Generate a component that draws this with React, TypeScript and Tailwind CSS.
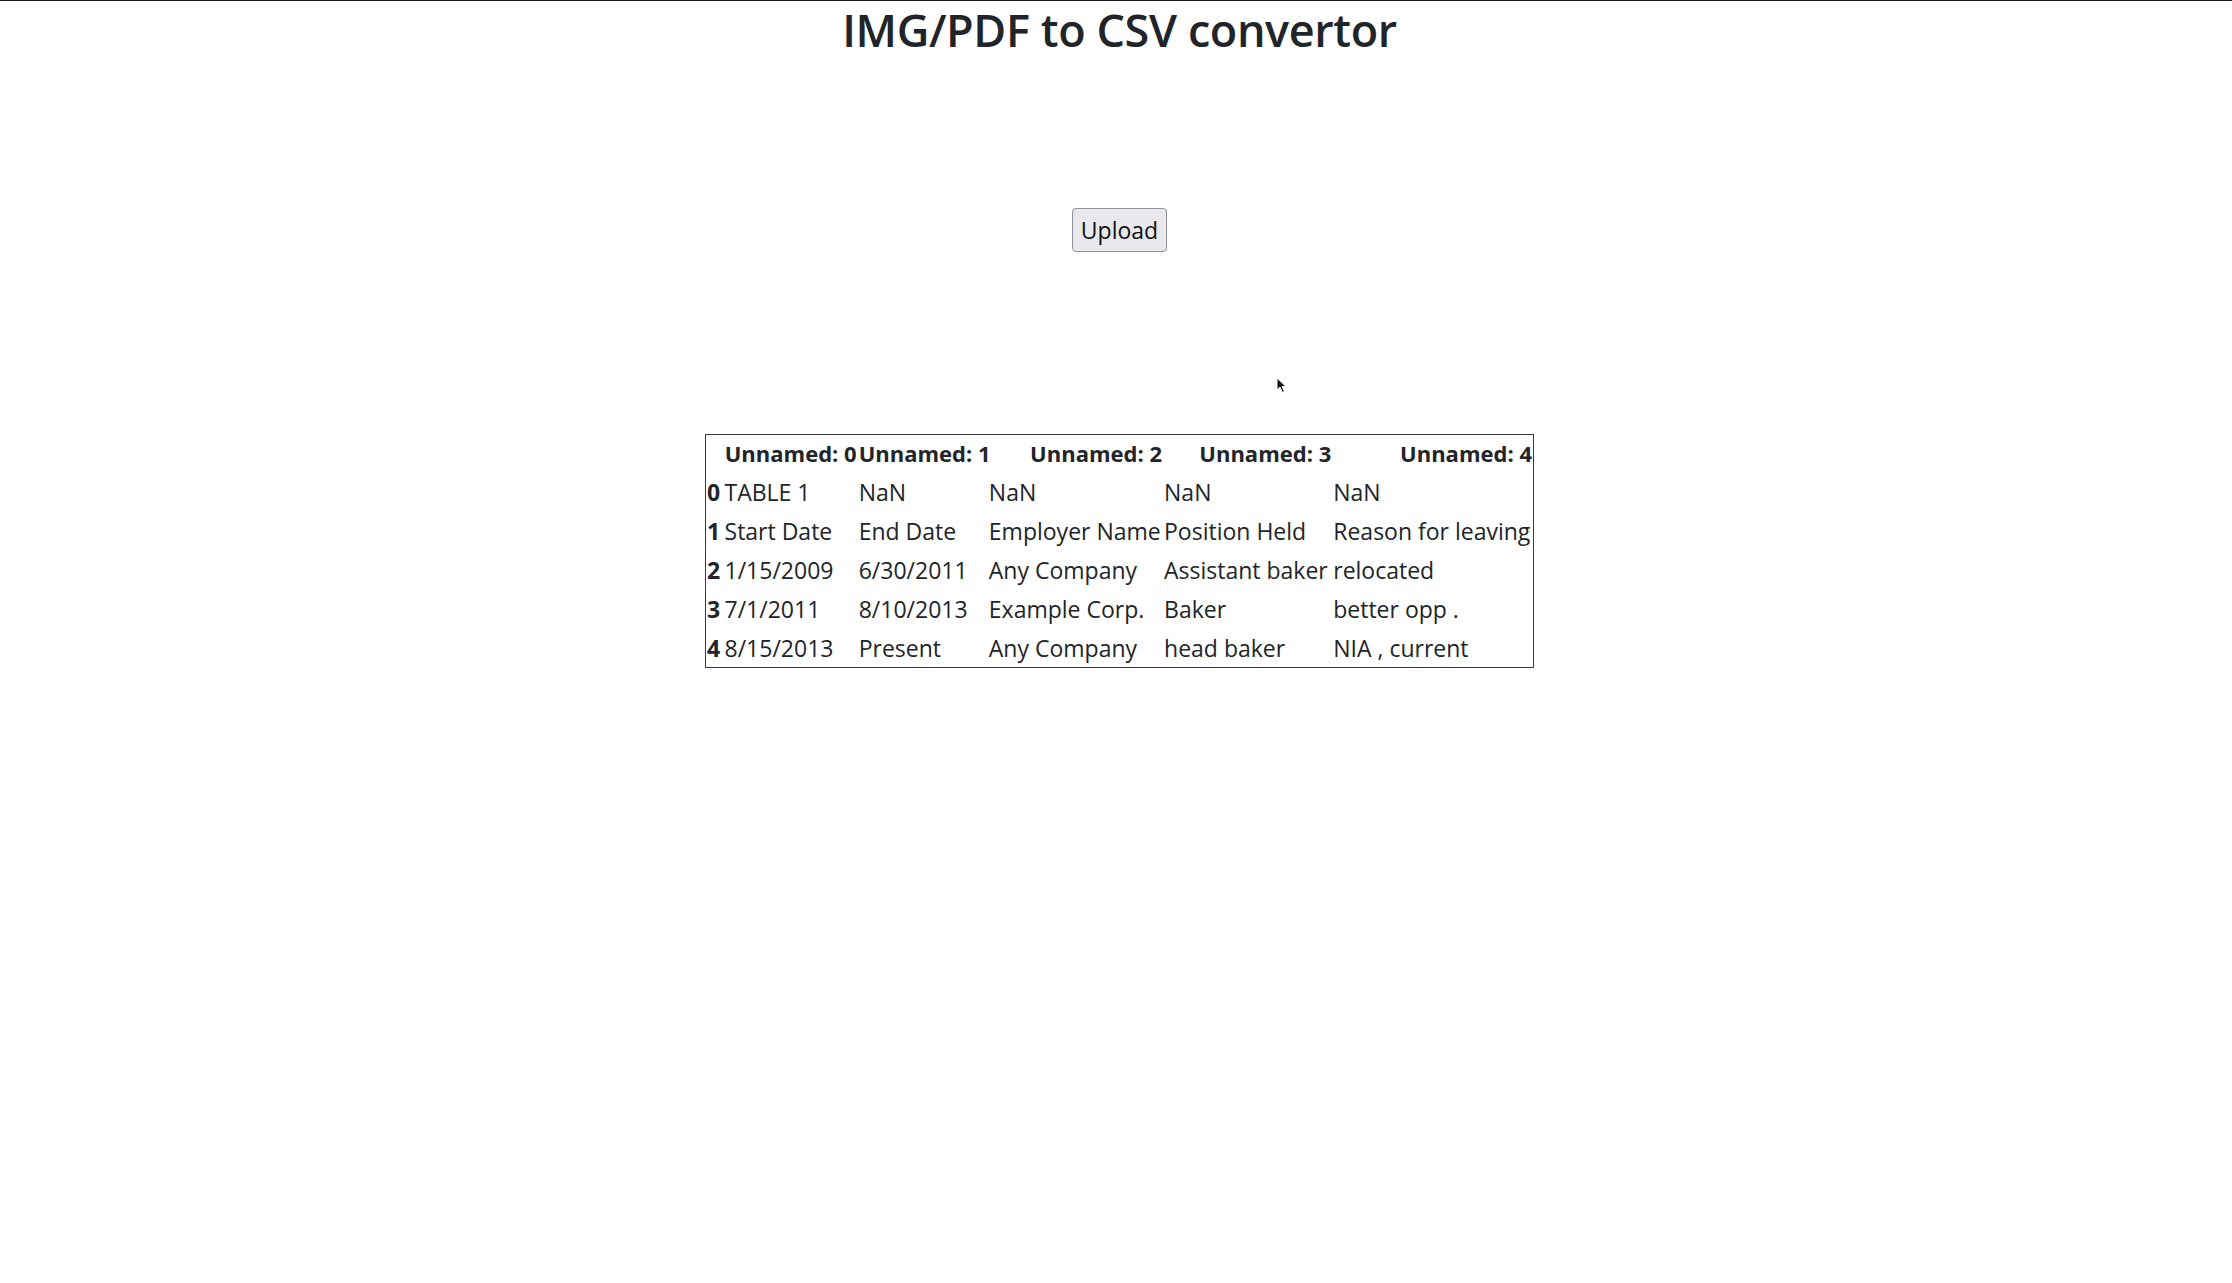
import React from 'react';

const headers = ['Unnamed: 0', 'Unnamed: 1', 'Unnamed: 2', 'Unnamed: 3', 'Unnamed: 4'];

const rows: string[][] = [
  ['TABLE 1', 'NaN', 'NaN', 'NaN', 'NaN'],
  ['Start Date', 'End Date', 'Employer Name', 'Position Held', 'Reason for leaving'],
  ['1/15/2009', '6/30/2011', 'Any Company', 'Assistant baker', 'relocated'],
  ['7/1/2011', '8/10/2013', 'Example Corp.', 'Baker', 'better opp .'],
  ['8/15/2013', 'Present', 'Any Company', 'head baker', 'NIA , current'],
];

// column widths measured from the screenshot
const colWidths = ['w-[134px]', 'w-[130px]', 'w-[175px]', 'w-[169px]', 'w-[201px]'];

export default function App() {
  return (
    <div className="relative min-h-[1283px] bg-white text-[#212529] font-['Open_Sans',sans-serif]">
      <div className="h-px bg-[#1a1a1a]" />

      <div className="flex flex-col items-center pl-[7px]">
        <h1 className="mt-[4px] text-[45px] font-semibold leading-[50px] tracking-[-0.4px]">
          IMG/PDF to CSV convertor
        </h1>

        <button className="mt-[153px] h-[44px] w-[95px] rounded-[4px] border border-[#8f8f9d] bg-[#e9e9ed] text-[23px] text-[#111]">
          Upload
        </button>

        <table className="mt-[182px] w-[829px] table-fixed border border-[#3a3a3a] text-[23px]">
          <thead>
            <tr className="h-[38px] text-right">
              <th className="w-[18px] px-px" />
              {headers.map((h, i) => (
                <th key={h} className={`${colWidths[i]} px-px text-[22px] font-bold whitespace-nowrap`}>
                  {h}
                </th>
              ))}
            </tr>
          </thead>
          <tbody>
            {rows.map((r, idx) => (
              <tr key={idx} className="h-[39px]">
                <th className="px-px text-left font-bold">{idx}</th>
                {r.map((c, j) => (
                  <td key={j} className="px-px text-left whitespace-nowrap">
                    {c}
                  </td>
                ))}
              </tr>
            ))}
          </tbody>
        </table>
      </div>

      {/* mouse pointer */}
      <svg className="absolute left-[1276px] top-[377px]" width="12" height="17" viewBox="0 0 12 17">
        <path d="M1 1 L1 13 L4 10 L6.5 15.5 L8.5 14.5 L6 9.5 L10 9.5 Z" fill="#111" stroke="#fff" strokeWidth="1" />
      </svg>
    </div>
  );
}
